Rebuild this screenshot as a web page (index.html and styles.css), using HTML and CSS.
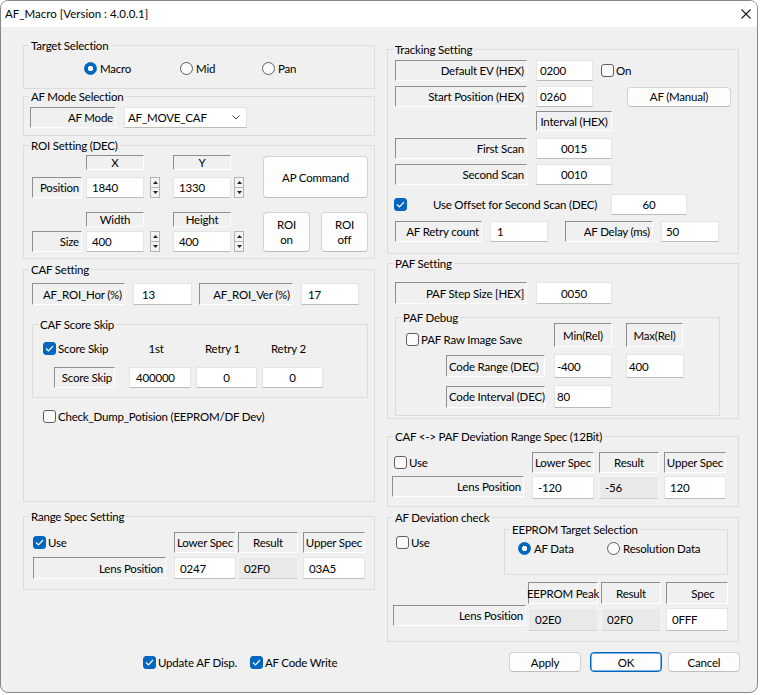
FILE: index.html
```html
<!DOCTYPE html>
<html lang="en">
<head>
<meta charset="utf-8">
<title>AF_Macro</title>
<link rel="stylesheet" href="styles.css">
</head>
<body>
<div class="window">
  <div class="titlebar">
    <span class="title">AF_Macro [Version : 4.0.0.1]</span>
    <svg class="close" width="10" height="10" viewBox="0 0 10 10"><path d="M0.5 0.5 L9.5 9.5 M9.5 0.5 L0.5 9.5" stroke="#1a1a1a" stroke-width="1.1" fill="none"/></svg>
  </div>
  <div class="body">
    <div class="columns">
      <div class="col left">
        <div class="group g-target">
          <div class="gtitle">Target Selection</div>
          <div class="row target-row">
            <span class="radio on w96"><span class="rb"></span>Macro</span>
            <span class="radio w82"><span class="rb"></span>Mid</span>
            <span class="radio"><span class="rb"></span>Pan</span>
          </div>
        </div>

        <div class="group g-afmode">
          <div class="gtitle">AF Mode Selection</div>
          <div class="row afmode-row">
            <span class="st w86 h21">AF Mode</span>
            <span class="combo ml8"><span>AF_MOVE_CAF</span><svg width="8" height="5" viewBox="0 0 8 5"><path d="M0.5 0.5 L4 4 L7.5 0.5" stroke="#444" fill="none"/></svg></span>
          </div>
        </div>

        <div class="group g-roi">
          <div class="gtitle">ROI Setting (DEC)</div>
          <div class="row roi-body">
            <div class="roi-grid">
              <div class="row roi-hdr"><span class="hd w58 h15">X</span><span class="hd w58 h15 ml29">Y</span></div>
              <div class="row roi-r1">
                <span class="st w50 h21">Position</span>
                <span class="ed w58 h21 ml4">1840</span>
                <span class="spin ml6"><span><svg width="5" height="3" viewBox="0 0 5 3"><path d="M0 3 L2.5 0 L5 3Z" fill="#222"/></svg></span><span><svg width="5" height="3" viewBox="0 0 5 3"><path d="M0 0 L5 0 L2.5 3Z" fill="#222"/></svg></span></span>
                <span class="ed w58 h21 ml13">1330</span>
                <span class="spin ml3"><span><svg width="5" height="3" viewBox="0 0 5 3"><path d="M0 3 L2.5 0 L5 3Z" fill="#222"/></svg></span><span><svg width="5" height="3" viewBox="0 0 5 3"><path d="M0 0 L5 0 L2.5 3Z" fill="#222"/></svg></span></span>
              </div>
              <div class="row roi-hdr2"><span class="hd w58 h15">Width</span><span class="hd w58 h15 ml29">Height</span></div>
              <div class="row roi-r2">
                <span class="st w50 h21">Size</span>
                <span class="ed w58 h21 ml4">400</span>
                <span class="spin ml6"><span><svg width="5" height="3" viewBox="0 0 5 3"><path d="M0 3 L2.5 0 L5 3Z" fill="#222"/></svg></span><span><svg width="5" height="3" viewBox="0 0 5 3"><path d="M0 0 L5 0 L2.5 3Z" fill="#222"/></svg></span></span>
                <span class="ed w58 h21 ml13">400</span>
                <span class="spin ml3"><span><svg width="5" height="3" viewBox="0 0 5 3"><path d="M0 3 L2.5 0 L5 3Z" fill="#222"/></svg></span><span><svg width="5" height="3" viewBox="0 0 5 3"><path d="M0 0 L5 0 L2.5 3Z" fill="#222"/></svg></span></span>
              </div>
            </div>
            <div class="roi-btns">
              <span class="btn w105 h42 ap-btn">AP Command</span>
              <div class="row roi-onoff">
                <span class="btn w47 h40">ROI<br>on</span>
                <span class="btn w47 h40">ROI<br>off</span>
              </div>
            </div>
          </div>
        </div>

        <div class="group g-caf">
          <div class="gtitle">CAF Setting</div>
          <div class="row caf-r1">
            <span class="st w93 h22">AF_ROI_Hor (%)</span>
            <span class="ed w59 h22 ml8 p8">13</span>
            <span class="st w94 h22 ml7">AF_ROI_Ver (%)</span>
            <span class="ed w58 h22 ml8 p6">17</span>
          </div>
          <div class="group g-skip">
            <div class="gtitle">CAF Score Skip</div>
            <div class="row skip-a">
              <span class="cb on w86"><span class="box"><svg width="9" height="7" viewBox="0 0 9 7"><path d="M1 3.5 L3.5 6 L8 1" stroke="#fff" stroke-width="1.2" fill="none"/></svg></span>Score Skip</span>
              <span class="colhd w62">1st</span>
              <span class="colhd w61 ml5">Retry 1</span>
              <span class="colhd w61 ml5">Retry 2</span>
            </div>
            <div class="row skip-b">
              <span class="st w61 h21">Score Skip</span>
              <span class="ed w62 h21 ml14 p6">400000</span>
              <span class="ed c w61 h21 ml5">0</span>
              <span class="ed c w61 h21 ml5">0</span>
            </div>
          </div>
          <div class="row dump-row">
            <span class="cb"><span class="box"></span>Check_Dump_Potision (EEPROM/DF Dev)</span>
          </div>
        </div>

        <div class="group g-range">
          <div class="gtitle">Range Spec Setting</div>
          <div class="spec spec-range">
            <div class="cell"><span class="cb on"><span class="box"><svg width="9" height="7" viewBox="0 0 9 7"><path d="M1 3.5 L3.5 6 L8 1" stroke="#fff" stroke-width="1.2" fill="none"/></svg></span>Use</span></div>
            <span class="hd w62">Lower Spec</span>
            <span class="hd w60">Result</span>
            <span class="hd w62">Upper Spec</span>
            <span class="st w133">Lens Position</span>
            <span class="ed w62">0247</span>
            <span class="ed ro w60">02F0</span>
            <span class="ed w62">03A5</span>
          </div>
        </div>
      </div>

      <div class="col right">
        <div class="group g-track">
          <div class="gtitle">Tracking Setting</div>
          <div class="row tr-r1">
            <span class="st w132 h21">Default EV (HEX)</span>
            <span class="ed w57 h21 ml9 p3">0200</span>
            <span class="cb ml8"><span class="box"></span>On</span>
          </div>
          <div class="row tr-r2">
            <span class="st w132 h21">Start Position (HEX)</span>
            <span class="ed w57 h21 ml9 p3">0260</span>
            <span class="btn w104 h20 ml34">AF (Manual)</span>
          </div>
          <div class="row tr-r3">
            <span class="hd w76 h20">Interval (HEX)</span>
          </div>
          <div class="row tr-r4">
            <span class="st w132 h21">First Scan</span>
            <span class="ed c w76 h21 ml9">0015</span>
          </div>
          <div class="row tr-r5">
            <span class="st w132 h21">Second Scan</span>
            <span class="ed c w76 h21 ml9">0010</span>
          </div>
          <div class="row tr-r6">
            <span class="cb on"><span class="box"><svg width="9" height="7" viewBox="0 0 9 7"><path d="M1 3.5 L3.5 6 L8 1" stroke="#fff" stroke-width="1.2" fill="none"/></svg></span></span>
            <span class="offset-text">Use Offset for Second Scan (DEC)</span>
            <span class="ed c w76 h21">60</span>
          </div>
          <div class="row tr-r7">
            <span class="st w87 h21">AF Retry count</span>
            <span class="ed w58 h21 ml8 p6">1</span>
            <span class="st w88 h21 ml17">AF Delay (ms)</span>
            <span class="ed w58 h21 ml8 p4">50</span>
          </div>
        </div>

        <div class="group g-paf">
          <div class="gtitle">PAF Setting</div>
          <div class="row paf-r1">
            <span class="st w132 h22">PAF Step Size [HEX]</span>
            <span class="ed c w76 h22 ml9">0050</span>
          </div>
          <div class="group g-pafdbg">
            <div class="gtitle">PAF Debug</div>
            <div class="row pd-a">
              <span class="cb w148"><span class="box"></span>PAF Raw Image Save</span>
              <span class="hd w58 h24">Min(Rel)</span>
              <span class="hd w57 h24 ml14">Max(Rel)</span>
            </div>
            <div class="row pd-b">
              <span class="st l w99 h22">Code Range (DEC)</span>
              <span class="ed w58 h24 ml9 p2">-400</span>
              <span class="ed w58 h24 ml14 p2">400</span>
            </div>
            <div class="row pd-c">
              <span class="st l w99 h22">Code Interval (DEC)</span>
              <span class="ed w58 h23 ml9 p2">80</span>
            </div>
          </div>
        </div>

        <div class="group g-dev">
          <div class="gtitle">CAF &lt;-&gt; PAF Deviation Range Spec (12Bit)</div>
          <div class="spec spec-dev">
            <div class="cell"><span class="cb ml2"><span class="box"></span>Use</span></div>
            <span class="hd w62">Lower Spec</span>
            <span class="hd w60">Result</span>
            <span class="hd w62">Upper Spec</span>
            <span class="st w132 h21">Lens Position</span>
            <span class="ed w62">-120</span>
            <span class="ed ro w60">-56</span>
            <span class="ed w62">120</span>
          </div>
        </div>

        <div class="group g-afdev">
          <div class="gtitle">AF Deviation check</div>
          <div class="row afdev-top">
            <span class="cb w108"><span class="box"></span>Use</span>
            <div class="group g-eeprom">
              <div class="gtitle">EEPROM Target Selection</div>
              <div class="row ee-row">
                <span class="radio on w89"><span class="rb"></span>AF Data</span>
                <span class="radio"><span class="rb"></span>Resolution Data</span>
              </div>
            </div>
          </div>
          <div class="spec spec-afdev">
            <div class="cell"></div>
            <span class="hd w70">EEPROM Peak</span>
            <span class="hd w60">Result</span>
            <span class="hd w62 spec-hd">Spec</span>
            <span class="st w133 h21">Lens Position</span>
            <span class="ed ro w70 h23 mt3 p6">02E0</span>
            <span class="ed ro w60 h23 mt3">02F0</span>
            <span class="ed w62 h23 mt3">0FFF</span>
          </div>
        </div>
      </div>
    </div>

    <div class="bottom">
      <div class="row checks">
        <span class="cb on w107"><span class="box"><svg width="9" height="7" viewBox="0 0 9 7"><path d="M1 3.5 L3.5 6 L8 1" stroke="#fff" stroke-width="1.2" fill="none"/></svg></span>Update AF Disp.</span>
        <span class="cb on"><span class="box"><svg width="9" height="7" viewBox="0 0 9 7"><path d="M1 3.5 L3.5 6 L8 1" stroke="#fff" stroke-width="1.2" fill="none"/></svg></span>AF Code Write</span>
      </div>
      <div class="row btns">
        <span class="btn w72 h20">Apply</span>
        <span class="btn def w72 h20 ml9">OK</span>
        <span class="btn w72 h20 ml6">Cancel</span>
      </div>
    </div>
  </div>
</div>
</body>
</html>
```

FILE: styles.css
```css
* { box-sizing: border-box; }
html, body { margin: 0; padding: 0; background: #ffffff; }
body {
  font-family: Lato, "Noto Sans", "DejaVu Sans", sans-serif;
  font-size: 11.5px;
  letter-spacing: -0.2px;
  line-height: 15px;
  color: #000;
}

.window {
  width: 758px;
  height: 693px;
  border: 1px solid #868686;
  border-radius: 8px;
  overflow: hidden;
  background: #f0f0f0;
  display: flex;
  flex-direction: column;
}
.titlebar {
  flex: none;
  height: 26px;
  background: #fff;
  display: flex;
  align-items: center;
  padding: 0 6px 1px 4px;
}
.title { flex: 1; white-space: nowrap; font-size: 11.5px; letter-spacing: 0; }
.close { flex: none; }

.body {
  flex: 1;
  display: flex;
  flex-direction: column;
  padding: 0 17px 0 22px;
}
.columns {
  flex: none;
  height: 615px;
  display: flex;
  gap: 12px;
  align-items: flex-start;
}
.col { width: 352px; flex: none; display: flex; flex-direction: column; }
.col.left { padding-top: 18px; }
.col.right { padding-top: 22px; }

.group {
  flex: none;
  border: 1px solid #dcdcdc;
  display: flex;
  flex-direction: column;
  align-items: flex-start;
}
.gtitle {
  height: 15px;
  line-height: 15px;
  margin: -8px 0 -7px 5px;
  padding: 0 2px;
  background: #f0f0f0;
  white-space: nowrap;
}
.row { display: flex; align-items: center; flex: none; }

/* widgets */
.st, .hd {
  display: flex;
  align-items: center;
  background: #f0f0f0;
  border: 1px solid;
  border-color: #8e8e8e #ffffff #ffffff #8e8e8e;
  white-space: nowrap;
  flex: none;
}
.st { justify-content: flex-end; padding-right: 2px; }
.st.l { justify-content: flex-start; padding: 0 0 0 2px; }
.hd { justify-content: center; }
.spec-hd { padding-left: 12px; }

.ed {
  display: flex;
  align-items: center;
  background: #fff;
  border: 1px solid #e4e4e4;
  border-bottom-color: #bcbcbc;
  padding-left: 5px;
  white-space: nowrap;
  flex: none;
}
.ed.c { justify-content: center; padding-left: 0; }
.ed.ro { background: #e9e9e9; border-color: #f3f3f3 #f3f3f3 #d4d4d4 #f3f3f3; }
.p2 { padding-left: 2px; }
.p3 { padding-left: 3px; }
.p4 { padding-left: 4px; }
.p6 { padding-left: 6px; }
.p8 { padding-left: 8px; }

.combo {
  width: 123px;
  height: 21px;
  display: flex;
  align-items: center;
  justify-content: space-between;
  background: #fff;
  border: 1px solid #e4e4e4;
  border-bottom-color: #bcbcbc;
  padding: 0 6px 0 3px;
  flex: none;
}

.btn {
  display: flex;
  align-items: center;
  justify-content: center;
  text-align: center;
  background: #fdfdfd;
  border: 1px solid #d3d3d3;
  border-bottom-color: #bdbdbd;
  border-radius: 4px;
  line-height: 15px;
  flex: none;
}
.btn.def { border-color: #0067c0; box-shadow: inset 0 0 0 0.5px #0067c0; }

.spin { width: 10px; height: 21px; display: flex; flex-direction: column; flex: none; }
.spin > span {
  flex: 1;
  display: flex;
  align-items: center;
  justify-content: center;
  background: #f4f4f4;
  border: 1px solid #b4b4b4;
}
.spin > span + span { border-top: none; }

.cb { display: inline-flex; align-items: center; height: 15px; white-space: nowrap; flex: none; }
.box {
  width: 13px;
  height: 13px;
  flex: none;
  border: 1px solid #5f5f5f;
  border-radius: 3px;
  background: #fbfbfb;
  margin-right: 2px;
  display: flex;
  align-items: center;
  justify-content: center;
}
.cb.on .box { background: #0067c0; border-color: #0067c0; }

.radio { display: inline-flex; align-items: center; height: 15px; white-space: nowrap; flex: none; }
.rb {
  width: 13px;
  height: 13px;
  flex: none;
  border-radius: 50%;
  border: 1px solid #5f5f5f;
  background: #fbfbfb;
  margin-right: 3px;
}
.radio.on .rb { border-color: #0067c0; background: radial-gradient(circle, #ffffff 0 2.4px, #0067c0 3px); }

.colhd { flex: none; text-align: center; padding-right: 8px; }

/* sizes */
.w47 { width: 47px; } .w50 { width: 50px; } .w57 { width: 57px; } .w58 { width: 58px; }
.w59 { width: 59px; } .w60 { width: 60px; } .w61 { width: 61px; } .w62 { width: 62px; }
.w70 { width: 70px; } .w72 { width: 72px; } .w76 { width: 76px; } .w82 { width: 82px; }
.w86 { width: 86px; } .w87 { width: 87px; } .w88 { width: 88px; } .w89 { width: 89px; }
.w93 { width: 93px; } .w94 { width: 94px; } .w96 { width: 96px; } .w99 { width: 99px; }
.w104 { width: 104px; } .w105 { width: 105px; } .w107 { width: 107px; } .w108 { width: 108px; }
.w132 { width: 132px; } .w133 { width: 133px; } .w148 { width: 148px; }
.h15 { height: 15px; } .h20 { height: 20px; } .h21 { height: 21px; } .h22 { height: 22px; }
.h23 { height: 23px; } .h24 { height: 24px; } .h40 { height: 40px; } .h42 { height: 42px; }
.ml2 { margin-left: 2px; } .ml3 { margin-left: 3px; } .ml4 { margin-left: 4px; } .ml5 { margin-left: 5px; }
.ml6 { margin-left: 6px; } .ml7 { margin-left: 7px; } .ml8 { margin-left: 8px; } .ml9 { margin-left: 9px; }
.ml13 { margin-left: 13px; } .ml14 { margin-left: 14px; } .ml17 { margin-left: 17px; }
.ml29 { margin-left: 29px; } .ml34 { margin-left: 34px; }
.mt3 { margin-top: 3px; }

/* left column groups */
.g-target { height: 44px; }
.target-row { margin: 15px 0 0 60px; }
.g-afmode { margin-top: 7px; height: 40px; }
.afmode-row { margin: 10px 0 0 6px; }
.g-roi { margin-top: 9px; height: 114px; }
.roi-body { margin: 9px 0 0 8px; align-items: flex-start; }
.roi-grid { display: flex; flex-direction: column; }
.roi-hdr { margin-left: 54px; }
.roi-r1 { margin-top: 7px; }
.roi-hdr2 { margin: 14px 0 0 54px; }
.roi-r2 { margin-top: 4px; }
.roi-btns { margin-left: 19px; display: flex; flex-direction: column; }
.ap-btn { margin-top: 1px; }
.roi-onoff { margin-top: 14px; gap: 11px; }

.g-caf { margin-top: 10px; height: 233px; }
.caf-r1 { margin: 13px 0 0 8px; }
.g-skip { margin: 19px 0 0 8px; width: 336px; height: 74px; }
.skip-a { margin: 16px 0 0 10px; }
.skip-b { margin: 11px 0 0 21px; }
.dump-row { margin: 11px 0 0 19px; }

.g-range { margin-top: 14px; height: 74px; }

.spec { display: grid; align-items: start; }
.spec > * { height: 21px; }
.spec .cell { display: flex; align-items: center; }
.spec-range { margin: 15px 0 0 9px; grid-template-columns: 141px 64px 65px 62px; grid-template-rows: 21px 22px; row-gap: 4px; }
.spec-range > :nth-child(n+5) { height: 22px; }

/* right column groups */
.g-track { height: 205px; }
.tr-r1 { margin: 10px 0 0 7px; }
.tr-r2 { margin: 5px 0 0 7px; }
.tr-r3 { margin: 4px 0 0 148px; }
.tr-r4 { margin: 7px 0 0 7px; }
.tr-r5 { margin: 5px 0 0 7px; }
.tr-r6 { margin: 9px 0 0 6px; }
.tr-r7 { margin: 6px 0 0 7px; }
.offset-text { width: 202px; text-align: center; padding-left: 10px; white-space: nowrap; flex: none; }

.g-paf { margin-top: 9px; height: 156px; }
.paf-r1 { margin: 18px 0 0 7px; }
.g-pafdbg { margin: 13px 0 0 7px; width: 325px; height: 99px; }
.pd-a { margin: 5px 0 0 10px; align-items: flex-end; }
.pd-b { margin: 7px 0 0 50px; }
.pd-c { margin: 7px 0 0 50px; }

.g-dev { margin-top: 17px; height: 71px; }
.spec-dev { margin: 15px 0 0 4px; grid-template-columns: 140px 67px 65px 62px; grid-template-rows: 21px 23px; row-gap: 3px; }
.spec-dev > :nth-child(n+6) { height: 23px; }

.g-afdev { margin-top: 10px; height: 125px; }
.afdev-top { margin: 11px 0 0 8px; align-items: flex-start; }
.afdev-top > .cb { margin-top: 6px; }
.g-eeprom { width: 224px; height: 46px; }
.ee-row { margin: 11px 0 0 13px; }
.spec-afdev { margin: 7px 0 0 5px; grid-template-columns: 135px 73px 65px 62px; grid-template-rows: 22px 26px; row-gap: 1px; }
.spec-afdev > :nth-child(-n+4) { height: 22px; }
.spec-afdev > :nth-child(n+6) { height: 23px; }

/* bottom */
.bottom { flex: none; margin-top: 10px; height: 20px; display: flex; align-items: center; }
.checks { margin-left: 120px; }
.btns { margin-left: auto; }
```
